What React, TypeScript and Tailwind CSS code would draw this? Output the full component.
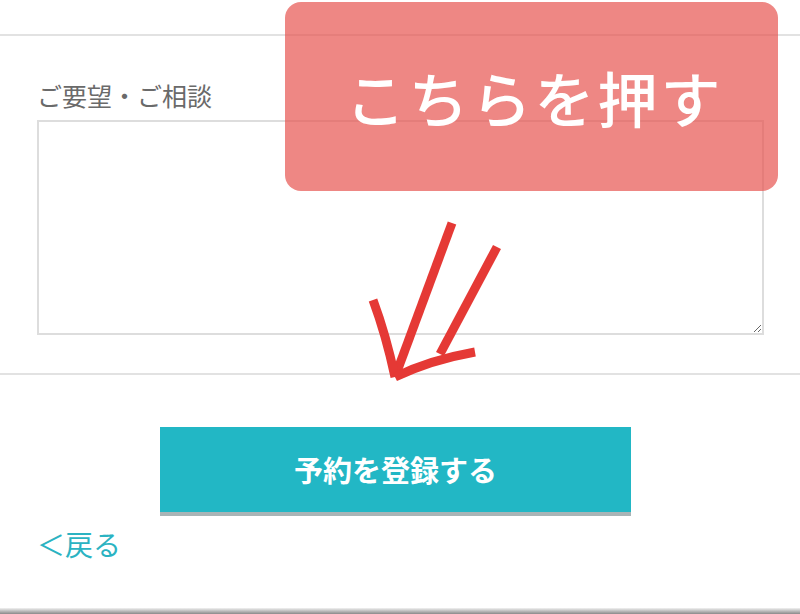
export default function App() {
  return (
    <div className="relative flex h-[614px] w-[800px] flex-col overflow-hidden bg-white font-['Noto_Sans_CJK_JP','Noto_Sans',sans-serif]">
      <div className="h-[34px]" />
      <div className="border-t-2 border-[#e2e2e2]" />

      <div className="px-[37px] pt-[41px]">
        <label className="block text-[25px] leading-[36px] text-[#6a6a6a]">ご要望・ご相談</label>
        <textarea className="mt-[7px] block h-[215px] w-[727px] resize-y border-2 border-[#dddddd] bg-white outline-none" />
      </div>

      <div className="mt-[38px] border-t-2 border-[#e2e2e2]" />

      <button className="ml-[160px] mt-[52px] flex h-[89px] w-[471px] items-center justify-center border-b-4 border-[#a9b4b6] bg-[#22b7c5] text-[29px] font-bold text-white">
        予約を登録する
      </button>

      <a href="#" className="ml-[37px] mt-[7px] w-fit text-[28px] leading-[42px] text-[#2bb3c2]">
        ＜戻る
      </a>

      <div className="mt-auto h-[6px] bg-gradient-to-b from-[#f2f2f2] to-[#8a8a8a]" />

      {/* 注釈: 矢印 */}
      <svg className="pointer-events-none absolute left-0 top-0" width="800" height="614" viewBox="0 0 800 614">
        <g fill="none" stroke="#e53935" strokeWidth="9" strokeLinecap="butt" strokeLinejoin="miter">
          <path d="M452 223 L395 377" />
          <path d="M373 300 Q386 335 395 377" />
          <path d="M497 247 L440 354" />
          <path d="M395 377 Q430 360 475 352" />
        </g>
      </svg>

      {/* 注釈: ラベル */}
      <div className="absolute left-[285px] top-[2px] flex h-[189px] w-[493px] items-center justify-center rounded-[16px] bg-[rgba(231,84,80,0.7)]">
        <span className="pl-[6px] text-[60px] font-medium tracking-[3px] text-white">こちらを押す</span>
      </div>
    </div>
  );
}
